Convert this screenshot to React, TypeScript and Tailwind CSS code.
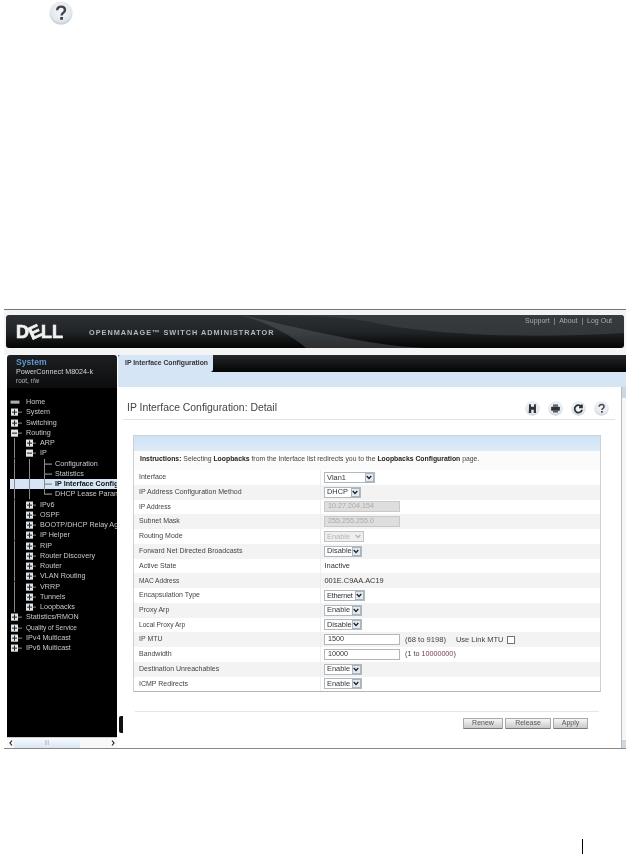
import React from "react";

type Kind = "plus" | "minus" | "tee" | "corner" | "line" | "none" | "home";
type Item = { label: string; cols: Kind[]; bold?: boolean; small?: boolean };

const COLS = [15, 14, 16];

function Cell({ kind, w }: { kind: Kind; w: number }) {
  const c = Math.floor(w / 2) + 0.5;
  const m = 5;
  const stroke = "#8a8a8a";
  return (
    <svg width={w} height="10.25" viewBox={`0 0 ${w} 10`} preserveAspectRatio="none" className="shrink-0 block">
      {kind === "line" && <path d={`M${c} 0V10`} stroke={stroke} fill="none" />}
      {kind === "tee" && <path d={`M${c} 0V10M${c} 5H${w}`} stroke={stroke} fill="none" />}
      {kind === "corner" && <path d={`M${c} 0V5H${w}`} stroke={stroke} fill="none" />}
      {(kind === "plus" || kind === "minus") && (
        <>
          <path d={`M${c} 5H${w}`} stroke={stroke} fill="none" />
          <rect x={c - 3.5} y={m - 3.5} width="7" height="7" fill="#dfe4e8" />
          <path d={`M${c - 2.5} 5H${c + 2.5}`} stroke="#222" fill="none" />
          {kind === "plus" && <path d={`M${c} 2.5V7.5`} stroke="#222" fill="none" />}
        </>
      )}
      {kind === "home" && <rect x={c - 4} y={3.5} width="9" height="3" fill="#a9b1a9" />}
    </svg>
  );
}

const items: Item[] = [
  { label: "Home", cols: ["home"] },
  { label: "System", cols: ["plus"] },
  { label: "Switching", cols: ["plus"] },
  { label: "Routing", cols: ["minus"] },
  { label: "ARP", cols: ["line", "plus"] },
  { label: "IP", cols: ["line", "minus"] },
  { label: "Configuration", cols: ["line", "line", "tee"] },
  { label: "Statistics", cols: ["line", "line", "tee"] },
  { label: "IP Interface Configuration", cols: ["line", "line", "tee"], bold: true },
  { label: "DHCP Lease Parameters", cols: ["line", "line", "corner"] },
  { label: "IPv6", cols: ["line", "plus"] },
  { label: "OSPF", cols: ["line", "plus"] },
  { label: "BOOTP/DHCP Relay Agent", cols: ["line", "plus"] },
  { label: "IP Helper", cols: ["line", "plus"] },
  { label: "RIP", cols: ["line", "plus"] },
  { label: "Router Discovery", cols: ["line", "plus"] },
  { label: "Router", cols: ["line", "plus"] },
  { label: "VLAN Routing", cols: ["line", "plus"] },
  { label: "VRRP", cols: ["line", "plus"] },
  { label: "Tunnels", cols: ["line", "plus"] },
  { label: "Loopbacks", cols: ["line", "plus"] },
  { label: "Statistics/RMON", cols: ["plus"] },
  { label: "Quality of Service", cols: ["plus"], small: true },
  { label: "IPv4 Multicast", cols: ["plus"] },
  { label: "IPv6 Multicast", cols: ["plus"] },
];

function TreeRow({ item }: { item: Item }) {
  return (
    <div className={`relative flex items-center h-[10.25px] whitespace-nowrap ${item.bold ? "bg-[#d5e5f5] text-[#111] font-bold" : "text-[#c9c9c9]"}`}>
      {item.bold && <span className="absolute left-0 top-0 w-[3px] h-full bg-black" />}
      {item.cols.map((k, i) => (
        <Cell key={i} kind={k} w={COLS[i]} />
      ))}
      <span className={`leading-[10px] ${item.cols.length === 3 ? "pl-[3px]" : "pl-[4px]"} ${item.small ? "text-[6.5px]" : "text-[7.2px]"}`}>{item.label}</span>
    </div>
  );
}

function Round({ glyph, size = 15 }: { glyph: "save" | "print" | "refresh" | "help"; size?: number }) {
  const id = `g-${glyph}-${size}`;
  return (
    <svg width={size} height={size} viewBox="0 0 24 24" className="block">
      <defs>
        <radialGradient id={id} cx="50%" cy="40%" r="60%">
          <stop offset="0%" stopColor="#f5f7f9" />
          <stop offset="75%" stopColor="#e4e9ee" />
          <stop offset="100%" stopColor="#c2cbd4" />
        </radialGradient>
      </defs>
      <circle cx="12" cy="12" r="11.5" fill={`url(#${id})`} />
      {glyph === "save" && <path d="M6.5 5h3v4h5V5h3v14h-3.5v-5h-4v5h-4z" fill="#2c3238" />}
      {glyph === "print" && (
        <>
          <rect x="8" y="5.5" width="8" height="3.5" fill="#555c63" />
          <rect x="5" y="9" width="14" height="6.5" rx="1" fill="#2c3238" />
          <rect x="8" y="15.5" width="8" height="3" fill="#555c63" />
        </>
      )}
      {glyph === "refresh" && (
        <path d="M17 9.5A6 6 0 1 0 17.7 14M17.5 5.5v4.6h-4.6" fill="none" stroke="#2c3238" strokeWidth="2.8" />
      )}
      {glyph === "help" && (
        <>
          <path d="M8.2 9.2C8.2 6.8 10 5.6 12.2 5.6 14.4 5.6 16 7 16 9c0 2.8-3.4 3-3.4 5.4" fill="none" stroke="#40464c" strokeWidth="2.4" />
          <rect x="11.2" y="16" width="2.8" height="2.8" fill="#40464c" />
        </>
      )}
    </svg>
  );
}

function Sel({ text, w, disabled, tight }: { text: string; w: number; disabled?: boolean; tight?: boolean }) {
  return (
    <div
      style={{ width: w }}
      className={`h-[11px] flex items-center border ${disabled ? "border-[#c4c4c4] text-[#b5b5b5] bg-[#eeeeee]" : "border-[#b0b8c0] text-[#333] bg-white"}`}
    >
      <span className={`flex-1 pl-[2px] text-[7.4px] leading-none whitespace-nowrap overflow-hidden ${tight ? "tracking-[-0.3px]" : ""}`}>{text}</span>
      <span className={`w-[9px] h-[9px] mr-[0.5px] flex items-center justify-center ${disabled ? "bg-[#eeeeee]" : "bg-[#e4eaf0] border border-[#a8b4c0]"}`}>
        <svg width="6" height="5" viewBox="0 0 6 5">
          <path d="M0.7 1l2.3 2.5L5.3 1" fill="none" stroke={disabled ? "#b5b5b5" : "#222"} strokeWidth="1.3" />
        </svg>
      </span>
    </div>
  );
}

function Inp({ text, disabled }: { text: string; disabled?: boolean }) {
  return (
    <div className={`w-[76px] h-[11px] pl-[3px] flex items-center text-[7.2px] border ${disabled ? "bg-[#dedede] border-[#c9c9c9] text-[#a9a9a9]" : "bg-white border-[#b5b5b5] text-[#333]"}`}>
      {text}
    </div>
  );
}

const rows: { label: string; value: React.ReactNode; small?: boolean }[] = [
  { label: "Interface", value: <Sel text="Vlan1" w={51} /> },
  { label: "IP Address Configuration Method", value: <Sel text="DHCP" w={37} /> },
  { label: "IP Address", small: true, value: <Inp text="10.27.204.154" disabled /> },
  { label: "Subnet Mask", value: <Inp text="255.255.255.0" disabled /> },
  { label: "Routing Mode", value: <Sel text="Enable" w={40} disabled /> },
  { label: "Forward Net Directed Broadcasts", value: <Sel text="Disable" w={38} /> },
  { label: "Active State", value: <span className="text-[7.4px] text-[#333] pl-[0.5px]">Inactive</span> },
  { label: "MAC Address", small: true, value: <span className="text-[7.4px] text-[#333] pl-[0.5px]">001E.C9AA.AC19</span> },
  { label: "Encapsulation Type", value: <Sel text="Ethernet" w={41} tight /> },
  { label: "Proxy Arp", value: <Sel text="Enable" w={38} /> },
  { label: "Local Proxy Arp", small: true, value: <Sel text="Disable" w={38} /> },
  {
    label: "IP MTU",
    value: (
      <div className="flex items-center">
        <Inp text="1500" />
        <span className="ml-[5px] text-[7.6px] text-[#444]">(68 to 9198)</span>
        <span className="ml-[10px] text-[7.5px] text-[#444]">Use Link MTU</span>
        <span className="ml-[4px] w-[8px] h-[8px] border border-[#64748b] bg-white" />
      </div>
    ),
  },
  {
    label: "Bandwidth",
    value: (
      <div className="flex items-center">
        <Inp text="10000" />
        <span className="ml-[5px] text-[7.2px] text-[#444]">
          (1 to <span className="text-[#7a3a4a]">10000000</span>)
        </span>
      </div>
    ),
  },
  { label: "Destination Unreachables", value: <Sel text="Enable" w={38} /> },
  { label: "ICMP Redirects", value: <Sel text="Enable" w={38} /> },
];

function Btn({ text, w }: { text: string; w: number }) {
  return (
    <div
      style={{ width: w }}
      className="h-[11px] flex items-center justify-center rounded-[1px] border border-[#a9a9a9] border-b-[#777] bg-gradient-to-b from-[#f7f7f7] to-[#c9c9c9] text-[7px] text-[#555]"
    >
      {text}
    </div>
  );
}

export default function App() {
  return (
    <div className="w-[641px] h-[854px] bg-white overflow-hidden font-['Liberation_Sans',Arial,sans-serif]">
      <div className="h-[309px] pl-[49px] pt-[1px] blur-[0.6px]">
        <Round glyph="help" size={24} />
      </div>

      <div className="relative ml-[4px] w-[622px] h-[440px] border-t border-t-[#777] border-b border-b-[#888] bg-[#f4f4f4] flex flex-col blur-[0.4px]">
        {/* header */}
        <div className="relative mt-[5px] mx-[2px] h-[33px] shrink-0 rounded-[3px] overflow-hidden bg-gradient-to-b from-[#2c3034] via-[#222528] to-[#050505] flex items-center">
          <svg className="absolute inset-0" width="619" height="33" viewBox="0 0 619 33" preserveAspectRatio="none">
            <path d="M235 0C300 14 370 33 430 33H300C285 20 262 8 235 0Z" fill="#5d6166" opacity="0.45" />
            <path d="M235 0H619V18C520 24 420 20 360 6 330 1 280 0 235 0Z" fill="#3c4044" opacity="0.7" />
          </svg>
          <div className="relative ml-[10px] flex items-center text-[18px] leading-none font-bold text-[#f2f2f2] [-webkit-text-stroke:0.7px_#f2f2f2]">
            <span>D</span>
            <span className="inline-block -rotate-[25deg]">E</span>
            <span>LL</span>
          </div>
          <div className="relative ml-[26px] text-[7.3px] font-bold tracking-[1px] text-[#b4b8bb] whitespace-nowrap mt-[4px]">
            OPENMANAGE™ SWITCH ADMINISTRATOR
          </div>
          <div className="relative ml-auto mr-[12px] self-start mt-[2px] text-[7px] leading-none text-[#a8acb0] whitespace-nowrap">
            Support&nbsp;&nbsp;|&nbsp;&nbsp;About&nbsp;&nbsp;|&nbsp;&nbsp;Log Out
          </div>
        </div>

        <div className="flex flex-1 mt-[7px] min-h-0 bg-white">
          {/* sidebar */}
          <div className="ml-[3px] w-[110px] shrink-0 flex flex-col min-h-0">
            <div className="h-[33px] shrink-0 rounded-t-[3px] bg-gradient-to-b from-[#1c1f22] to-[#0c0d0e] pl-[9px] pt-[3px]">
              <div className="text-[8.6px] leading-[9px] font-bold text-[#5f98cf]">System</div>
              <div className="text-[7.2px] leading-[10px] text-[#d4d4d4]">PowerConnect M8024-k</div>
              <div className="text-[6.4px] leading-[8px] text-[#b8b8b8]">root, r/w</div>
            </div>
            <div className="flex-1 bg-black pt-[9px] overflow-hidden min-h-0">
              {items.map((it) => (
                <TreeRow key={it.label} item={it} />
              ))}
            </div>
            <div className="h-[11px] shrink-0 flex items-stretch bg-[#f8f8f8] border-t border-[#ccc]">
              <span className="w-[7px] flex items-center justify-center">
                <svg width="4" height="6" viewBox="0 0 4 6"><path d="M3 0.5L1 3l2 2.5" fill="none" stroke="#222" strokeWidth="1.2" /></svg>
              </span>
              <span className="w-[66px] bg-gradient-to-b from-[#f8fbfe] to-[#d9e6f2] flex items-center justify-center text-[5px] text-[#999]">|||</span>
              <span className="flex-1" />
              <span className="w-[9px] flex items-center justify-center">
                <svg width="4" height="6" viewBox="0 0 4 6"><path d="M1 0.5L3 3l-2 2.5" fill="none" stroke="#222" strokeWidth="1.2" /></svg>
              </span>
            </div>
          </div>

          {/* right */}
          <div className="ml-[1px] flex-1 min-w-0 flex flex-col min-h-0">
            <div className="h-[17px] shrink-0 flex bg-gradient-to-b from-[#25282b] to-[#050505]">
              <div className="w-[95px] h-full bg-[#d5e5f6] rounded-tl-[2px] rounded-br-[3px] pl-[7px] flex items-center text-[6.8px] font-bold text-[#333] whitespace-nowrap">
                IP Interface Configuration
              </div>
            </div>
            <div className="h-[15px] shrink-0 bg-[#d5e5f6]" />
            <div className="flex-1 flex min-h-0 bg-white">
              <div className="flex-1 min-w-0 flex flex-col">
                <div className="mt-[8px] ml-[5px] mr-[6px] h-[25px] shrink-0 flex items-center justify-between border-b border-[#e2e2e2] pt-[2px] pl-[4px]">
                  <h1 className="text-[10.4px] font-normal text-[#444] whitespace-nowrap">IP Interface Configuration: Detail</h1>
                  <div className="flex gap-[8px] mr-[6.5px]">
                    <Round glyph="save" />
                    <Round glyph="print" />
                    <Round glyph="refresh" />
                    <Round glyph="help" />
                  </div>
                </div>

                <div className="mt-[15px] ml-[15px] w-[468px] h-[257px] shrink-0 border border-[#c9d2d9] border-b-[#b5b5b5] bg-white flex flex-col">
                  <div className="h-[15px] shrink-0 bg-gradient-to-b from-[#cfe2f5] to-[#deebf7]" />
                  <div className="h-[19px] shrink-0 pl-[6px] pb-[2px] flex items-center text-[6.85px] text-[#444] whitespace-nowrap bg-[#fbfbfb]">
                    <span>
                      <b className="text-[#222]">Instructions:</b> Selecting <b className="text-[#222]">Loopbacks</b> from the Interface list redirects you to the <b className="text-[#222]">Loopbacks Configuration</b> page.
                    </span>
                  </div>
                  {rows.map((r, i) => (
                    <div key={r.label} className={`h-[14.75px] shrink-0 flex items-center ${i % 2 === 0 ? "bg-white" : "bg-[#f3f3f3]"}`}>
                      <div className={`w-[186px] shrink-0 pl-[5px] text-[#444] whitespace-nowrap ${r.small ? "text-[6.6px]" : "text-[7px]"}`}>{r.label}</div>
                      <div className="flex-1 h-full flex items-center border-l border-[#eeeeee] pl-[3px]">{r.value}</div>
                    </div>
                  ))}
                </div>

                <div className="mt-[19px] ml-[17px] w-[464px] border-t border-[#e6e6e6] pt-[6px] flex justify-end gap-[2px] pr-[11px]">
                  <Btn text="Renew" w={40} />
                  <Btn text="Release" w={46} />
                  <Btn text="Apply" w={35} />
                </div>
              </div>

              {/* vertical scrollbar */}
              <div className="w-[5px] shrink-0 flex flex-col bg-[#eef1f4] border-l border-[#b5bcc4]">
                <div className="h-[11px] bg-[#cfd6dd]" />
                <div className="flex-1 bg-[#f4f6f8]" />
                <div className="h-[8px] bg-[#cfd6dd]" />
              </div>
            </div>
          </div>
        </div>

        {/* collapse handle lying over the gap */}
        <div className="absolute left-[115px] top-[406px] w-[4px] h-[17px] rounded-l-[2px] bg-[#111]" />
      </div>

      <div className="mt-[90px] ml-[582px] w-px h-[15px] bg-black" />
    </div>
  );
}
